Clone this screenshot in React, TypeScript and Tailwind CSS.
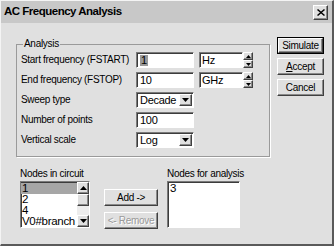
import React from "react";

const font = "font-['Liberation_Sans',Arial,sans-serif] text-[10px] tracking-[-0.3px]";
const sunken =
  "border border-t-[#7a7a7a] border-l-[#7a7a7a] border-b-white border-r-white shadow-[inset_1px_1px_0_#3c3c3c] bg-white";
const raised =
  "border border-t-white border-l-white border-b-[#404040] border-r-[#404040] shadow-[inset_-1px_-1px_0_#8a8a8a] bg-[#e0e0e0]";

function Arrow({ up = false }: { up?: boolean }) {
  return (
    <svg width="7" height="4" viewBox="0 0 7 4" className={up ? "" : "rotate-180"}>
      <path d="M3.5 0 L7 4 L0 4 Z" fill="#000" />
    </svg>
  );
}

function TextBox({ value, caret = false }: { value: string; caret?: boolean }) {
  return (
    <div className={`${sunken} w-[58px] h-[16px] flex items-center pl-[3px] leading-none text-[11px]`}>
      {caret ? <span className="bg-[#9a9a9a] px-px">{value}</span> : value}
    </div>
  );
}

function Combo({ value }: { value: string }) {
  return (
    <div className={`${sunken} w-[58px] h-[16px] flex items-center justify-between pl-[3px] pr-px leading-none text-[11px]`}>
      <span>{value}</span>
      <div className={`${raised} w-[13px] h-[12px] flex items-center justify-center`}>
        <Arrow />
      </div>
    </div>
  );
}

function Spinner({ value }: { value: string }) {
  return (
    <div className="flex items-center h-[16px]">
      <div className={`${sunken} w-[44px] h-[16px] flex items-center pl-[2px] leading-none text-[11px]`}>{value}</div>
      <div className="flex flex-col w-[10px] h-[16px]">
        <div className={`${raised} flex-1 flex items-center justify-center`}>
          <svg width="5" height="3" viewBox="0 0 5 3">
            <path d="M2.5 0 L5 3 L0 3 Z" fill="#000" />
          </svg>
        </div>
        <div className={`${raised} flex-1 flex items-center justify-center`}>
          <svg width="5" height="3" viewBox="0 0 5 3">
            <path d="M0 0 L5 0 L2.5 3 Z" fill="#000" />
          </svg>
        </div>
      </div>
    </div>
  );
}

function Row({ label, children }: { label: string; children: React.ReactNode }) {
  return (
    <div className="flex items-center h-[16px]">
      <div className="w-[115px] leading-none whitespace-nowrap">{label}</div>
      {children}
    </div>
  );
}

function Btn({ label, def = false }: { label: React.ReactNode; def?: boolean }) {
  return (
    <div className={def ? "border border-black" : ""}>
      <div
        className={`${raised} ${def ? "w-[45px] h-[15px]" : "w-[47px] h-[17px]"} flex items-center justify-center leading-none whitespace-nowrap`}
      >
        {label}
      </div>
    </div>
  );
}

export default function App() {
  const circuitNodes = ["1", "2", "4", "V0#branch"];
  return (
    <div className={`${font} w-[334px] h-[247px] bg-white text-black`}>
      <div className="w-[334px] h-[246px] flex flex-col bg-[#e0e0e0] border-l border-t border-l-[#f4f4f4] border-t-[#f4f4f4] border-r-2 border-b-2 border-r-[#5a5a5a] border-b-[#5a5a5a]">
        <div className="h-[22px] flex items-center justify-between pl-[3px] pr-[4px] bg-[#c8c8c8]">
          <span className="font-bold text-[11.5px] leading-none tracking-[-0.5px]">AC Frequency Analysis</span>
          <div className={`${raised} w-[15px] h-[15px] flex items-center justify-center`}>
            <svg width="8" height="7" viewBox="0 0 8 7">
              <path d="M1 0 L4 2.6 L7 0 L8 1 L5 3.5 L8 6 L7 7 L4 4.4 L1 7 L0 6 L3 3.5 L0 1 Z" fill="#000" />
            </svg>
          </div>
        </div>

        <div className="flex pl-[15px]">
          <div className="flex flex-col">
            <fieldset className="mt-[15px] w-[254px] border border-[#9a9a9a] shadow-[1px_1px_0_#fff] pl-[4px] pb-[8px]">
              <legend className="ml-[2px] px-[1px] leading-[12px]">Analysis</legend>
              <div className="flex flex-col gap-[4px] pt-[2px]">
                <Row label="Start frequency (FSTART)">
                  <TextBox value="1" caret />
                  <div className="ml-[5px]">
                    <Spinner value="Hz" />
                  </div>
                </Row>
                <Row label="End frequency (FSTOP)">
                  <TextBox value="10" />
                  <div className="ml-[5px]">
                    <Spinner value="GHz" />
                  </div>
                </Row>
                <Row label="Sweep type">
                  <Combo value="Decade" />
                </Row>
                <Row label="Number of points">
                  <TextBox value="100" />
                </Row>
                <Row label="Vertical scale">
                  <Combo value="Log" />
                </Row>
              </div>
            </fieldset>

            <div className="flex mt-[10px] pl-[4px]">
              <div className="flex flex-col">
                <div className="leading-[14px] h-[14px] whitespace-nowrap">Nodes in circuit</div>
                <div className={`${sunken} w-[70px] h-[47px] flex`}>
                  <div className="flex-1 flex flex-col leading-[11px] text-[11.5px] pt-px">
                    {circuitNodes.map((n, i) => (
                      <div key={n} className={`pl-px whitespace-nowrap ${i === 0 ? "bg-[#a6a6a6]" : ""}`}>
                        {n}
                      </div>
                    ))}
                  </div>
                  <div className="w-[12px] flex flex-col bg-[#ededed]">
                    <div className={`${raised} h-[12px] flex items-center justify-center`}>
                      <Arrow up />
                    </div>
                    <div className={`${raised} h-[12px]`} />
                    <div className="flex-1" />
                    <div className={`${raised} h-[12px] flex items-center justify-center`}>
                      <Arrow />
                    </div>
                  </div>
                </div>
              </div>

              <div className="flex flex-col gap-[6px] ml-[14px] mt-[22px]">
                <div className={`${raised} w-[54px] h-[17px] flex items-center justify-center leading-none whitespace-nowrap`}>
                  Add -&gt;
                </div>
                <div
                  className={`${raised} w-[54px] h-[17px] flex items-center justify-center leading-none whitespace-nowrap text-[#9a9a9a] [text-shadow:1px_1px_0_#fff]`}
                >
                  &lt;- Remove
                </div>
              </div>

              <div className="flex flex-col ml-[9px]">
                <div className="leading-[14px] h-[14px] whitespace-nowrap">Nodes for analysis</div>
                <div className={`${sunken} w-[73px] h-[47px] leading-[11px] text-[11.5px] pl-[2px] pt-px`}>3</div>
              </div>
            </div>
          </div>

          <div className="flex flex-col gap-[4px] ml-[7px] mt-[14px]">
            <Btn label="Simulate" def />
            <Btn
              label={
                <span>
                  <span className="underline">A</span>ccept
                </span>
              }
            />
            <Btn label="Cancel" />
          </div>
        </div>
      </div>
    </div>
  );
}
